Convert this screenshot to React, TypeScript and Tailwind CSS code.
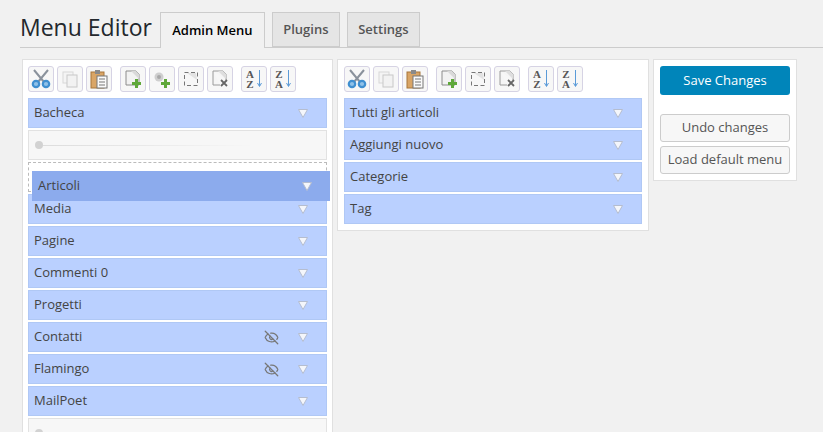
import React from "react";
import { EyeOff } from "lucide-react";

const Cut = () => (
  <svg width="20" height="20" viewBox="0 0 20 20" fill="none">
    <path d="M3 1 L13 13 M17 1 L7 13" stroke="#8a929c" strokeWidth="2" />
    <circle cx="5" cy="15" r="3.2" stroke="#3f8fd0" strokeWidth="2.2" fill="#8fc1e8" />
    <circle cx="15" cy="15" r="3.2" stroke="#3f8fd0" strokeWidth="2.2" fill="#8fc1e8" />
  </svg>
);

const Copy = () => (
  <svg width="18" height="18" viewBox="0 0 18 18">
    <rect x="2" y="2" width="10" height="11" fill="#f4f4f4" stroke="#d8d8d8" />
    <rect x="6" y="5" width="10" height="12" fill="#f2f2f2" stroke="#c8c8c8" />
  </svg>
);

const Paste = () => (
  <svg width="18" height="20" viewBox="0 0 18 20">
    <rect x="1" y="3" width="13" height="16" fill="#d9a566" stroke="#a8763a" />
    <rect x="5" y="1" width="5" height="4" fill="#8a8a8a" />
    <rect x="7" y="7" width="10" height="12" fill="#fafafa" stroke="#777" />
    <path d="M9 10h6M9 13h6M9 16h6" stroke="#777" />
  </svg>
);

const Plus = () => (
  <path d="M12 10h3v3h3v3h-3v3h-3v-3H9v-3h3z" fill="#5fa83a" />
);

const NewItem = () => (
  <svg width="20" height="20" viewBox="0 0 20 20">
    <path d="M3 2h10l3 3v11H3z" fill="#f2f2f2" stroke="#8c8c8c" />
    <path d="M8 2h5l3 3v5z" fill="#d9d9d9" />
    <Plus />
  </svg>
);

const NewSeparator = () => (
  <svg width="20" height="20" viewBox="0 0 20 20">
    <circle cx="7" cy="8" r="4.5" fill="#cfcfcf" />
    <circle cx="7" cy="8" r="2" fill="#a8a8a8" />
    <Plus />
  </svg>
);

const SelectAll = () => (
  <svg width="18" height="18" viewBox="0 0 18 18">
    <path d="M5 3 L14 3 L15 10 Z" fill="#e2e2e2" />
    <rect x="2.5" y="2.5" width="13" height="13" fill="none" stroke="#777" strokeDasharray="4 2.5" />
  </svg>
);

const DeleteItem = () => (
  <svg width="20" height="20" viewBox="0 0 20 20">
    <path d="M3 2h10l3 3v6M3 2v14h7" fill="#f5f5f5" stroke="#9a9a9a" />
    <path d="M8 2h5l3 3v5z" fill="#dedede" />
    <path d="M11 11l6 6M17 11l-6 6" stroke="#666" strokeWidth="1.8" />
  </svg>
);

const Sort = ({ top, bottom }: { top: string; bottom: string }) => (
  <div className="flex items-center gap-[3px]">
    <div className="flex flex-col items-center font-['Liberation_Serif',serif] text-[11px] leading-[10px] font-bold text-[#555]">
      <span>{top}</span>
      <span>{bottom}</span>
    </div>
    <svg width="5" height="18" viewBox="0 0 5 18">
      <path d="M2.5 0v16M.5 13l2 3.5 2-3.5" stroke="#5b9bd8" fill="none" />
    </svg>
  </div>
);

const Btn = ({ children }: { children: React.ReactNode }) => (
  <div className="flex h-[26px] w-[26px] items-center justify-center rounded-[3px] border border-[#d6d3e4] bg-[#f7f7f7]">
    {children}
  </div>
);

const Arrow = () => (
  <svg width="10" height="9" viewBox="0 0 10 9" className="shrink-0">
    <path d="M0.5 0.5h9L5 8.5z" fill="#f4f6fb" stroke="#b5bdcf" />
  </svg>
);

const Item = ({ label, hidden }: { label: string; hidden?: boolean }) => (
  <div className="flex h-[30px] items-center border border-[#b0c8f5] bg-[#bad0ff] pl-[5px] pr-[18px] text-[13px] text-[#444]">
    <span className="flex-1">{label}</span>
    {hidden && <EyeOff size={15} strokeWidth={2} className="mr-[19px] text-[#777]" />}
    <Arrow />
  </div>
);

const Separator = () => (
  <div className="flex h-[30px] items-center border border-[#e2e2e2] bg-[#f7f7f7] pl-[6px]">
    <span className="h-[8px] w-[8px] rounded-full bg-[#d2d2d2]" />
    <span className="h-px w-[210px] bg-gradient-to-r from-[#dddddd] to-[#f7f7f7]" />
  </div>
);

const App = () => (
  <div className="h-[432px] w-[823px] overflow-hidden bg-[#f1f1f1] font-['Open_Sans',sans-serif] text-[#444]">
    <div className="ml-5 flex h-[48px] items-end border-b border-[#ccc] pb-0">
      <h1 className="mb-[4px] mr-[8px] text-[23px] leading-[32px] text-[#23282d]">
        Menu Editor
      </h1>
      <div className="-mb-px flex gap-[7px] text-[13px] font-semibold">
        <div className="flex h-[36px] w-[105px] items-center justify-center border border-b-0 border-[#ccc] bg-[#f1f1f1] text-[#000]">
          Admin Menu
        </div>
        <div className="flex h-[35px] w-[68px] items-center justify-center border border-[#ccc] bg-[#e5e5e5] text-[#555]">
          Plugins
        </div>
        <div className="flex h-[35px] w-[73px] items-center justify-center border border-[#ccc] bg-[#e5e5e5] text-[#555]">
          Settings
        </div>
      </div>
    </div>

    <div className="mt-[11px] ml-[22px] flex items-start gap-1">
      <div className="relative flex h-[400px] w-[311px] flex-col border border-[#e0e0e0] bg-white px-[5px] pt-[6px]">
        <div className="mb-[6px] flex gap-2">
          <div className="flex gap-[3px]">
            <Btn><Cut /></Btn>
            <Btn><Copy /></Btn>
            <Btn><Paste /></Btn>
          </div>
          <div className="flex gap-[3px]">
            <Btn><NewItem /></Btn>
            <Btn><NewSeparator /></Btn>
            <Btn><SelectAll /></Btn>
            <Btn><DeleteItem /></Btn>
          </div>
          <div className="flex gap-[3px]">
            <Btn><Sort top="A" bottom="Z" /></Btn>
            <Btn><Sort top="Z" bottom="A" /></Btn>
          </div>
        </div>
        <div className="flex flex-col gap-[2px]">
          <Item label="Bacheca" />
          <Separator />
          <div className="h-[30px] border border-dashed border-[#bbb] bg-white" />
          <Item label="Media" />
          <Item label="Pagine" />
          <Item label="Commenti 0" />
          <Item label="Progetti" />
          <Item label="Contatti" hidden />
          <Item label="Flamingo" hidden />
          <Item label="MailPoet" />
          <Separator />
        </div>
        <div className="absolute top-[111px] left-[9px] flex h-[30px] w-[298px] items-center bg-[#8cabed] pl-[6px] pr-[18px] text-[13px] text-[#444]">
          <span className="flex-1">Articoli</span>
          <Arrow />
        </div>
      </div>

      <div className="flex w-[312px] flex-col border border-[#e0e0e0] bg-white px-[6px] pt-[6px] pb-[6px]">
        <div className="mb-[6px] flex gap-2">
          <div className="flex gap-[3px]">
            <Btn><Cut /></Btn>
            <Btn><Copy /></Btn>
            <Btn><Paste /></Btn>
          </div>
          <div className="flex gap-[3px]">
            <Btn><NewItem /></Btn>
            <Btn><SelectAll /></Btn>
            <Btn><DeleteItem /></Btn>
          </div>
          <div className="flex gap-[3px]">
            <Btn><Sort top="A" bottom="Z" /></Btn>
            <Btn><Sort top="Z" bottom="A" /></Btn>
          </div>
        </div>
        <div className="flex flex-col gap-[2px]">
          <Item label="Tutti gli articoli" />
          <Item label="Aggiungi nuovo" />
          <Item label="Categorie" />
          <Item label="Tag" />
        </div>
      </div>

      <div className="flex w-[144px] flex-col border border-[#e0e0e0] bg-white px-[6px] pt-[6px] pb-[6px] text-[13px]">
        <div className="flex h-[29px] items-center justify-center rounded-[3px] bg-[#0085ba] text-white">
          Save Changes
        </div>
        <div className="mt-[19px] flex h-[28px] items-center justify-center rounded-[3px] border border-[#ccc] bg-[#f7f7f7] text-[#555]">
          Undo changes
        </div>
        <div className="mt-[4px] flex h-[28px] items-center justify-center rounded-[3px] border border-[#ccc] bg-[#f7f7f7] text-[#555]">
          Load default menu
        </div>
      </div>
    </div>
  </div>
);

export default App;
